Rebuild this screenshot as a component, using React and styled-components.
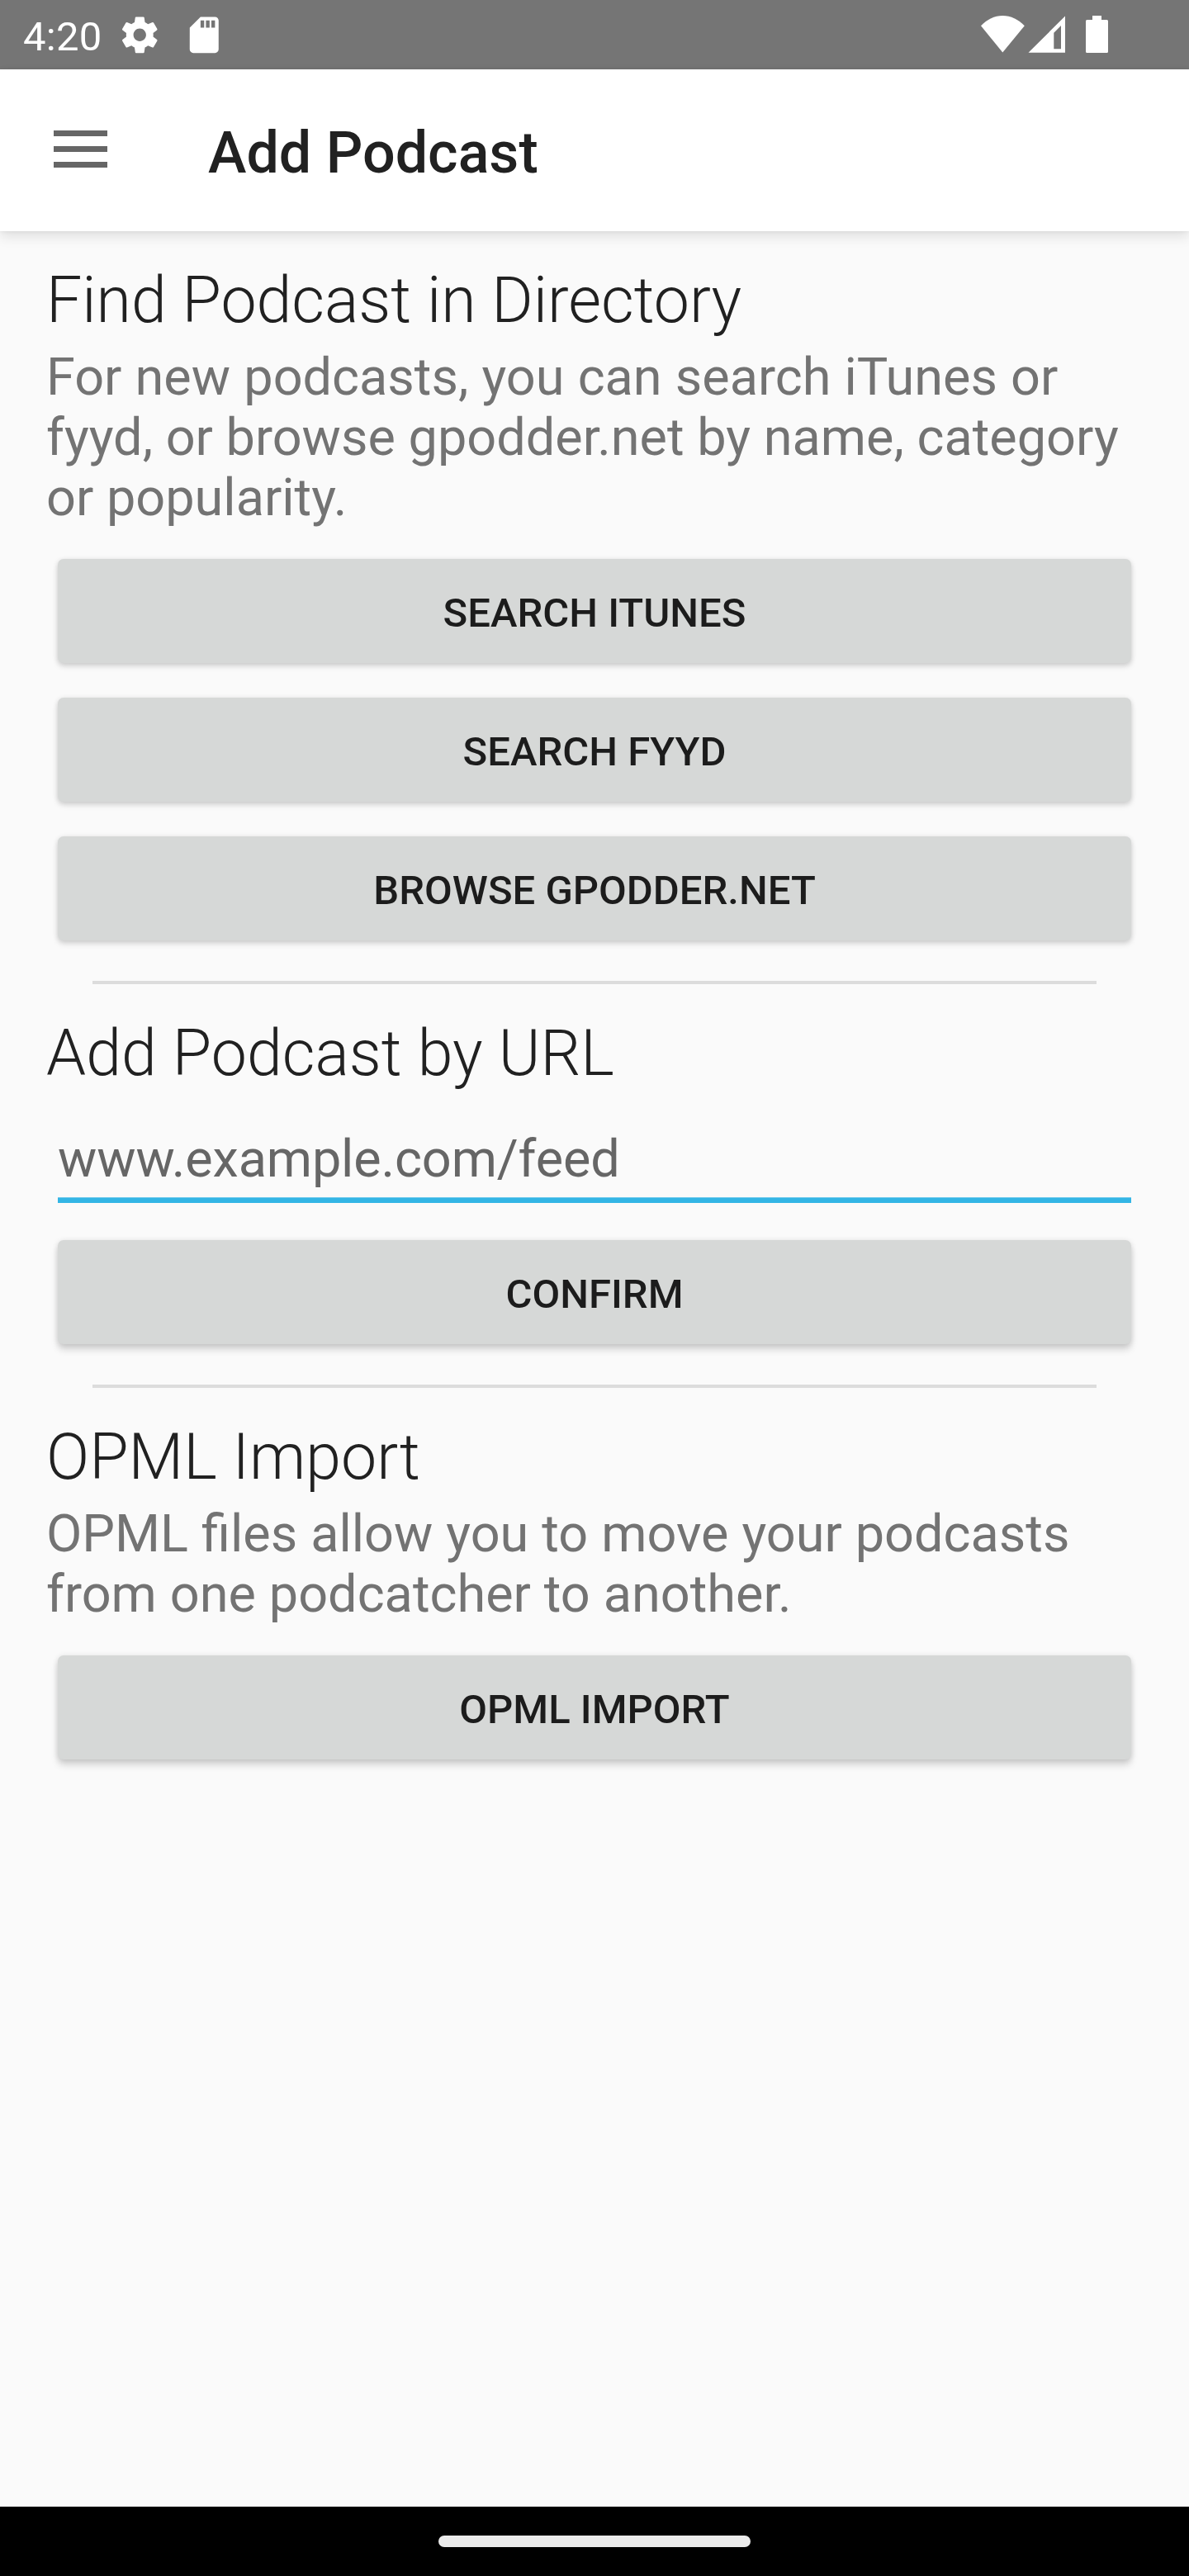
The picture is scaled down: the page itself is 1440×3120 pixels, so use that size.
import React from "react";
import styled, { createGlobalStyle } from "styled-components";

const GlobalStyle = createGlobalStyle`
  *, *::before, *::after { box-sizing: border-box; }
  body {
    margin: 0;
    background: #fafafa;
    font-family: Roboto, "Noto Sans", sans-serif;
  }
`;

const Screen = styled.div`
  width: 1440px;
  height: 3120px;
  display: flex;
  flex-direction: column;
  background: #fafafa;
  overflow: hidden;
`;

const StatusBar = styled.header`
  height: 84px;
  flex: none;
  display: flex;
  justify-content: space-between;
  background: #757575;
  color: #fff;
`;

const StatusStart = styled.div`
  display: flex;
  padding-left: 28px;
`;

const Clock = styled.time`
  width: 115px;
  padding-top: 5px;
  font-size: 49px;
  line-height: 79px;
  letter-spacing: 0.3px;
`;

const StatusIcon = styled.svg`
  display: block;
  flex: none;
  width: 52.5px;
  height: 52.5px;
  margin: 16px 25px 0 0;
  fill: currentColor;
`;

const StatusEnd = styled.svg`
  display: block;
  width: 170px;
  height: 84px;
  margin-right: 90px;
  fill: currentColor;
`;

const AppBar = styled.div`
  height: 196px;
  flex: none;
  display: flex;
  padding: 60px 0 0 65px;
  background: #fff;
  box-shadow: 0 7px 14px rgba(0, 0, 0, 0.1), 0 0 5px rgba(0, 0, 0, 0.07);
`;

const MenuButton = styled.button`
  width: 65px;
  height: 45px;
  margin: 14px 122px 0 0;
  padding: 0;
  border: 0;
  background: none;
  display: flex;
  flex-direction: column;
  justify-content: space-between;
`;

const MenuLine = styled.span`
  display: block;
  width: 65px;
  height: 7px;
  background: #666;
`;

const Title = styled.h1`
  margin: 0;
  font-size: 70px;
  line-height: 82px;
  font-weight: 500;
  color: #212121;
  white-space: nowrap;
`;

const Content = styled.main`
  flex: 1;
  padding: 39px 56px 0;
`;

const Section = styled.section`
  display: flex;
  flex-direction: column;
`;

const Heading = styled.h2`
  margin: 0;
  font-size: 77px;
  line-height: 90px;
  font-weight: 300;
  color: #212121;
  white-space: nowrap;
`;

const Description = styled.p`
  display: flex;
  flex-direction: column;
  margin: 11px 0 38px;
  font-size: 63px;
  line-height: 73px;
  color: #737373;
`;

const TextLine = styled.span`
  white-space: nowrap;
  word-spacing: ${(p) => p.$gap || 0}px;
`;

const ButtonStack = styled.div`
  display: flex;
  flex-direction: column;
  gap: 42px;
  padding: 0 14px;
`;

const Button = styled.button`
  height: 126px;
  padding: 5px 0 0;
  border: 0;
  border-radius: 7px;
  background: #d6d8d7;
  box-shadow: ${(p) =>
    p.$deep
      ? "0 7px 9px rgba(0, 0, 0, 0.14), 0 1px 7px rgba(0, 0, 0, 0.12)"
      : "0 4px 7px rgba(0, 0, 0, 0.13), 0 1px 6px rgba(0, 0, 0, 0.1)"};
  color: #1c1c1c;
  font: 500 49px/57px Roboto, "Noto Sans", sans-serif;
  text-transform: uppercase;
`;

const Divider = styled.hr`
  height: 4px;
  margin: 49px 56px 39px;
  border: 0;
  background: #dcdcdc;
`;

const UrlInput = styled.input`
  height: 90px;
  margin: 46px 14px 45px;
  padding: 0 0 11px;
  border: 0;
  border-bottom: 6px solid #33b5e5;
  border-radius: 0;
  outline: 0;
  background: transparent;
  box-shadow: inset 0 -1px 0 #70caec;
  font: 400 63px/73px Roboto, "Noto Sans", sans-serif;
  letter-spacing: -0.14px;
  color: #212121;
  &::placeholder {
    color: #666;
    opacity: 1;
  }
`;

const NavBar = styled.footer`
  height: 84px;
  flex: none;
  display: flex;
  justify-content: center;
  padding-top: 35px;
  background: #000;
`;

const NavHandle = styled.div`
  width: 378px;
  height: 14px;
  border-radius: 7px;
  background: #ebebeb;
`;

export default function App() {
  return (
    <>
      <GlobalStyle />
      <Screen>
        <StatusBar>
          <StatusStart>
            <Clock>4:20</Clock>
            <StatusIcon viewBox="0 0 24 24">
              <path d="M19.43 12.98c.04-.32.07-.64.07-.98s-.03-.66-.07-.98l2.11-1.65c.19-.15.24-.42.12-.64l-2-3.46c-.12-.22-.39-.3-.61-.22l-2.49 1c-.52-.4-1.08-.73-1.69-.98l-.38-2.65C14.46 2.18 14.25 2 14 2h-4c-.25 0-.46.18-.49.42l-.38 2.65c-.61.25-1.17.59-1.69.98l-2.49-1c-.23-.09-.49 0-.61.22l-2 3.46c-.13.22-.07.49.12.64l2.11 1.65c-.04.32-.07.65-.07.98s.03.66.07.98l-2.11 1.65c-.19.15-.24.42-.12.64l2 3.46c.12.22.39.3.61.22l2.49-1c.52.4 1.08.73 1.69.98l.38 2.65c.03.24.24.42.49.42h4c.25 0 .46-.18.49-.42l.38-2.65c.61-.25 1.17-.59 1.69-.98l2.49 1c.23.09.49 0 .61-.22l2-3.46c.12-.22.07-.49-.12-.64l-2.11-1.65zM12 15.5c-1.93 0-3.5-1.57-3.5-3.5s1.57-3.5 3.5-3.5 3.5 1.57 3.5 3.5-1.57 3.5-3.5 3.5z" />
            </StatusIcon>
            <StatusIcon viewBox="0 0 24 24">
              <path d="M18 2h-8L4.02 8 4 20c0 1.1.9 2 2 2h12c1.1 0 2-.9 2-2V4c0-1.1-.9-2-2-2zm-6 6h-2V4h2v4zm3 0h-2V4h2v4zm3 0h-2V4h2v4z" />
            </StatusIcon>
          </StatusStart>
          <StatusEnd viewBox="0 0 170 84">
            <path d="M34.3 63.5 8 31.3C15.5 23.5 24.5 19 34.3 19s19 4.5 26.5 12.3z" />
            <path
              fillRule="evenodd"
              d="M65.5 63.7 110 19.5v44.2zM96.3 39.7v19.5h8.7V31z"
            />
            <path d="M143 19h11v5h6.5a1.5 1.5 0 0 1 1.5 1.5v37a1.5 1.5 0 0 1-1.5 1.5h-24a1.5 1.5 0 0 1-1.5-1.5v-37a1.5 1.5 0 0 1 1.5-1.5h6.5z" />
          </StatusEnd>
        </StatusBar>
        <AppBar>
          <MenuButton aria-label="Open menu">
            <MenuLine />
            <MenuLine />
            <MenuLine />
          </MenuButton>
          <Title>Add Podcast</Title>
        </AppBar>
        <Content>
          <Section>
            <Heading>Find Podcast in Directory</Heading>
            <Description>
              <TextLine $gap={0.5}>For new podcasts, you can search iTunes or</TextLine>
              <TextLine>fyyd, or browse gpodder.net by name, category</TextLine>
              <TextLine>or popularity.</TextLine>
            </Description>
            <ButtonStack>
              <Button>Search iTunes</Button>
              <Button>Search fyyd</Button>
              <Button>Browse gpodder.net</Button>
            </ButtonStack>
          </Section>
          <Divider />
          <Section>
            <Heading>
              <TextLine $gap={0.4}>Add Podcast by URL</TextLine>
            </Heading>
            <UrlInput placeholder="www.example.com/feed" />
            <ButtonStack>
              <Button $deep>Confirm</Button>
            </ButtonStack>
          </Section>
          <Divider />
          <Section>
            <Heading>OPML Import</Heading>
            <Description>
              <TextLine $gap={0.35}>OPML files allow you to move your podcasts</TextLine>
              <TextLine $gap={0.3}>from one podcatcher to another.</TextLine>
            </Description>
            <ButtonStack>
              <Button $deep>OPML Import</Button>
            </ButtonStack>
          </Section>
        </Content>
        <NavBar>
          <NavHandle />
        </NavBar>
      </Screen>
    </>
  );
}
